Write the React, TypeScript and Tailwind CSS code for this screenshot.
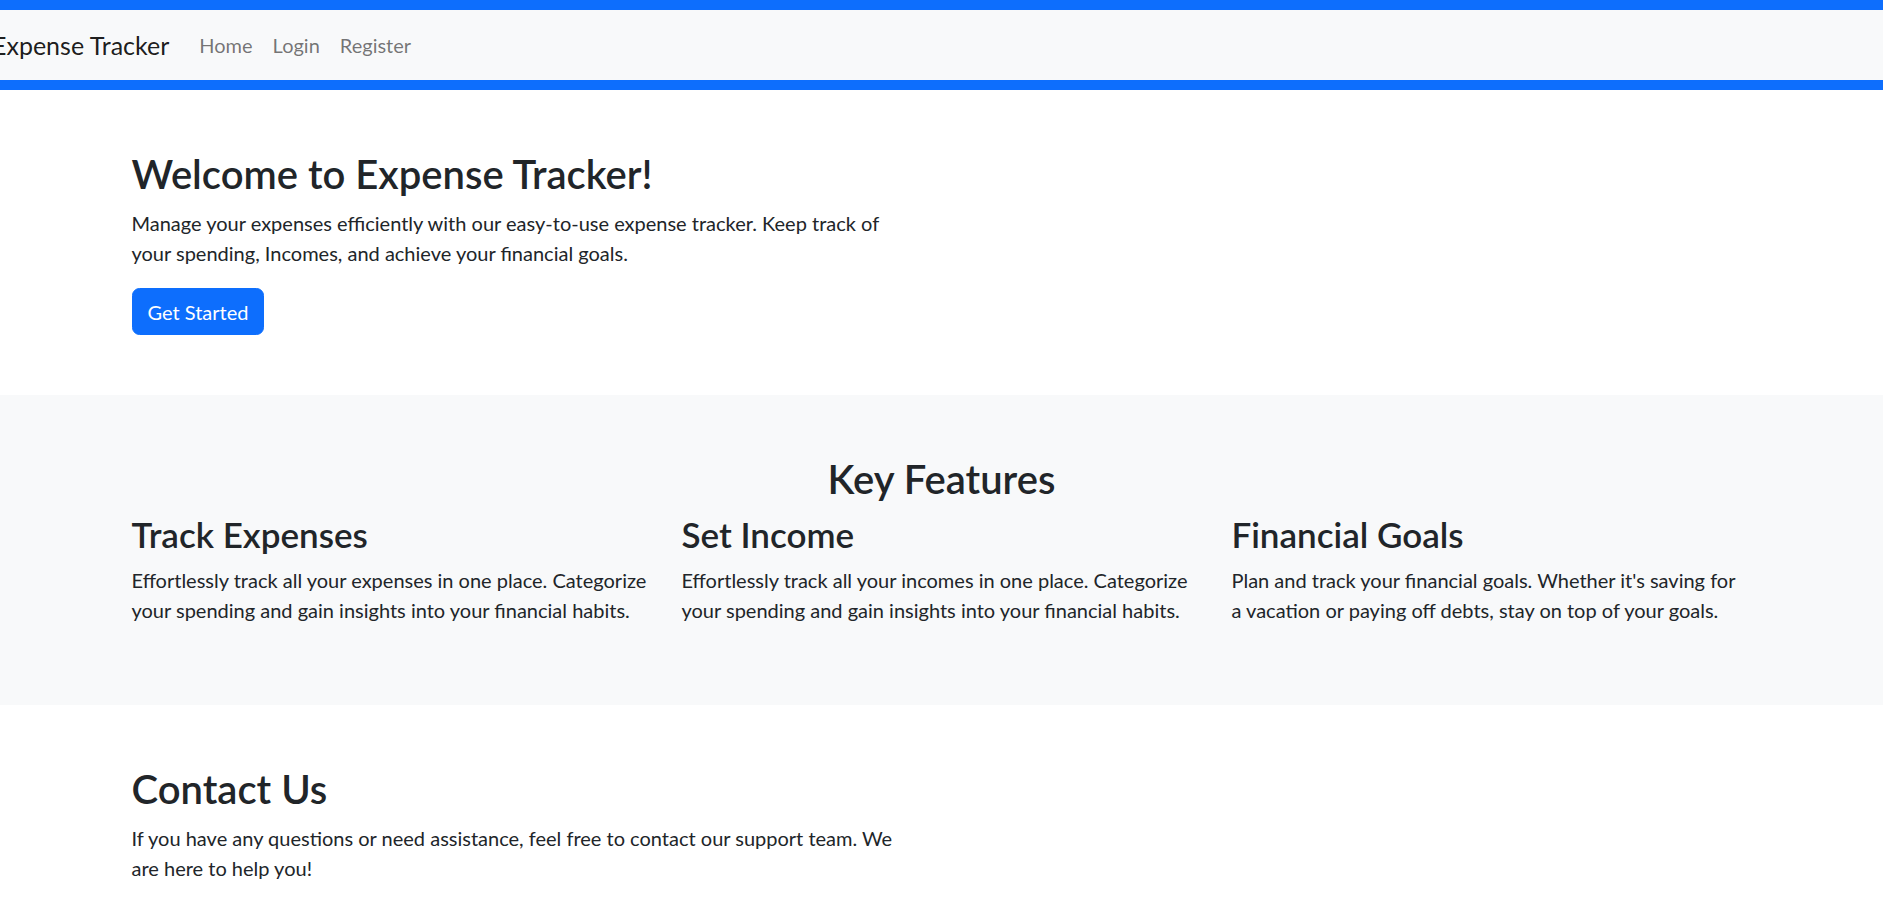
const features = [
  {
    title: 'Track Expenses',
    text: 'Effortlessly track all your expenses in one place. Categorize your spending and gain insights into your financial habits.',
    width: '',
  },
  {
    title: 'Set Income',
    text: 'Effortlessly track all your incomes in one place. Categorize your spending and gain insights into your financial habits.',
    width: '',
  },
  {
    title: 'Financial Goals',
    text: "Plan and track your financial goals. Whether it's saving for a vacation or paying off debts, stay on top of your goals.",
    width: 'max-w-[512px]',
  },
];

export default function App() {
  return (
    <div className="min-h-screen bg-white font-['Lato',sans-serif] text-[20px] leading-[30px] text-[#212529]">
      <nav className="h-[90px] border-y-[10px] border-[#0d6efd] bg-[#f8f9fa] flex items-center">
        <a href="#" className="ml-[-8px] mr-[20px] text-[25px] leading-[37px] text-black/90">
          Expense Tracker
        </a>
        <ul className="flex">
          <li><a href="#" className="block px-[10px] text-black/55">Home</a></li>
          <li><a href="#" className="block px-[10px] text-black/55">Login</a></li>
          <li><a href="#" className="block px-[10px] text-black/55">Register</a></li>
        </ul>
      </nav>

      <section className="py-[60px]">
        <div className="mx-auto w-[1650px] px-[15px]">
          <h2 className="mb-[10px] text-[40px] leading-[48px] font-semibold">Welcome to Expense Tracker!</h2>
          <p className="mb-[20px] max-w-[775px]">
            Manage your expenses efficiently with our easy-to-use expense tracker. Keep track of your spending, Incomes, and achieve your financial goals.
          </p>
          <a href="#" className="inline-block rounded-[7.5px] border border-[#0d6efd] bg-[#0d6efd] px-[15px] py-[7.5px] text-white">
            Get Started
          </a>
        </div>
      </section>

      <section className="bg-[#f8f9fa] py-[60px]">
        <div className="mx-auto w-[1650px] px-[15px]">
          <h2 className="mb-[10px] text-center text-[40px] leading-[48px] font-semibold">Key Features</h2>
          <div className="mx-[-15px] flex">
            {features.map((f) => (
              <div key={f.title} className="w-1/3 px-[15px]">
                <h3 className="mb-[10px] text-[35px] leading-[42px] font-semibold">{f.title}</h3>
                <p className={`mb-[20px] ${f.width}`}>{f.text}</p>
              </div>
            ))}
          </div>
        </div>
      </section>

      <section className="py-[60px]">
        <div className="mx-auto w-[1650px] px-[15px]">
          <h2 className="mb-[10px] text-[40px] leading-[48px] font-semibold">Contact Us</h2>
          <p className="mb-[20px] max-w-[775px]">
            If you have any questions or need assistance, feel free to contact our support team. We are here to help you!
          </p>
        </div>
      </section>
    </div>
  );
}
